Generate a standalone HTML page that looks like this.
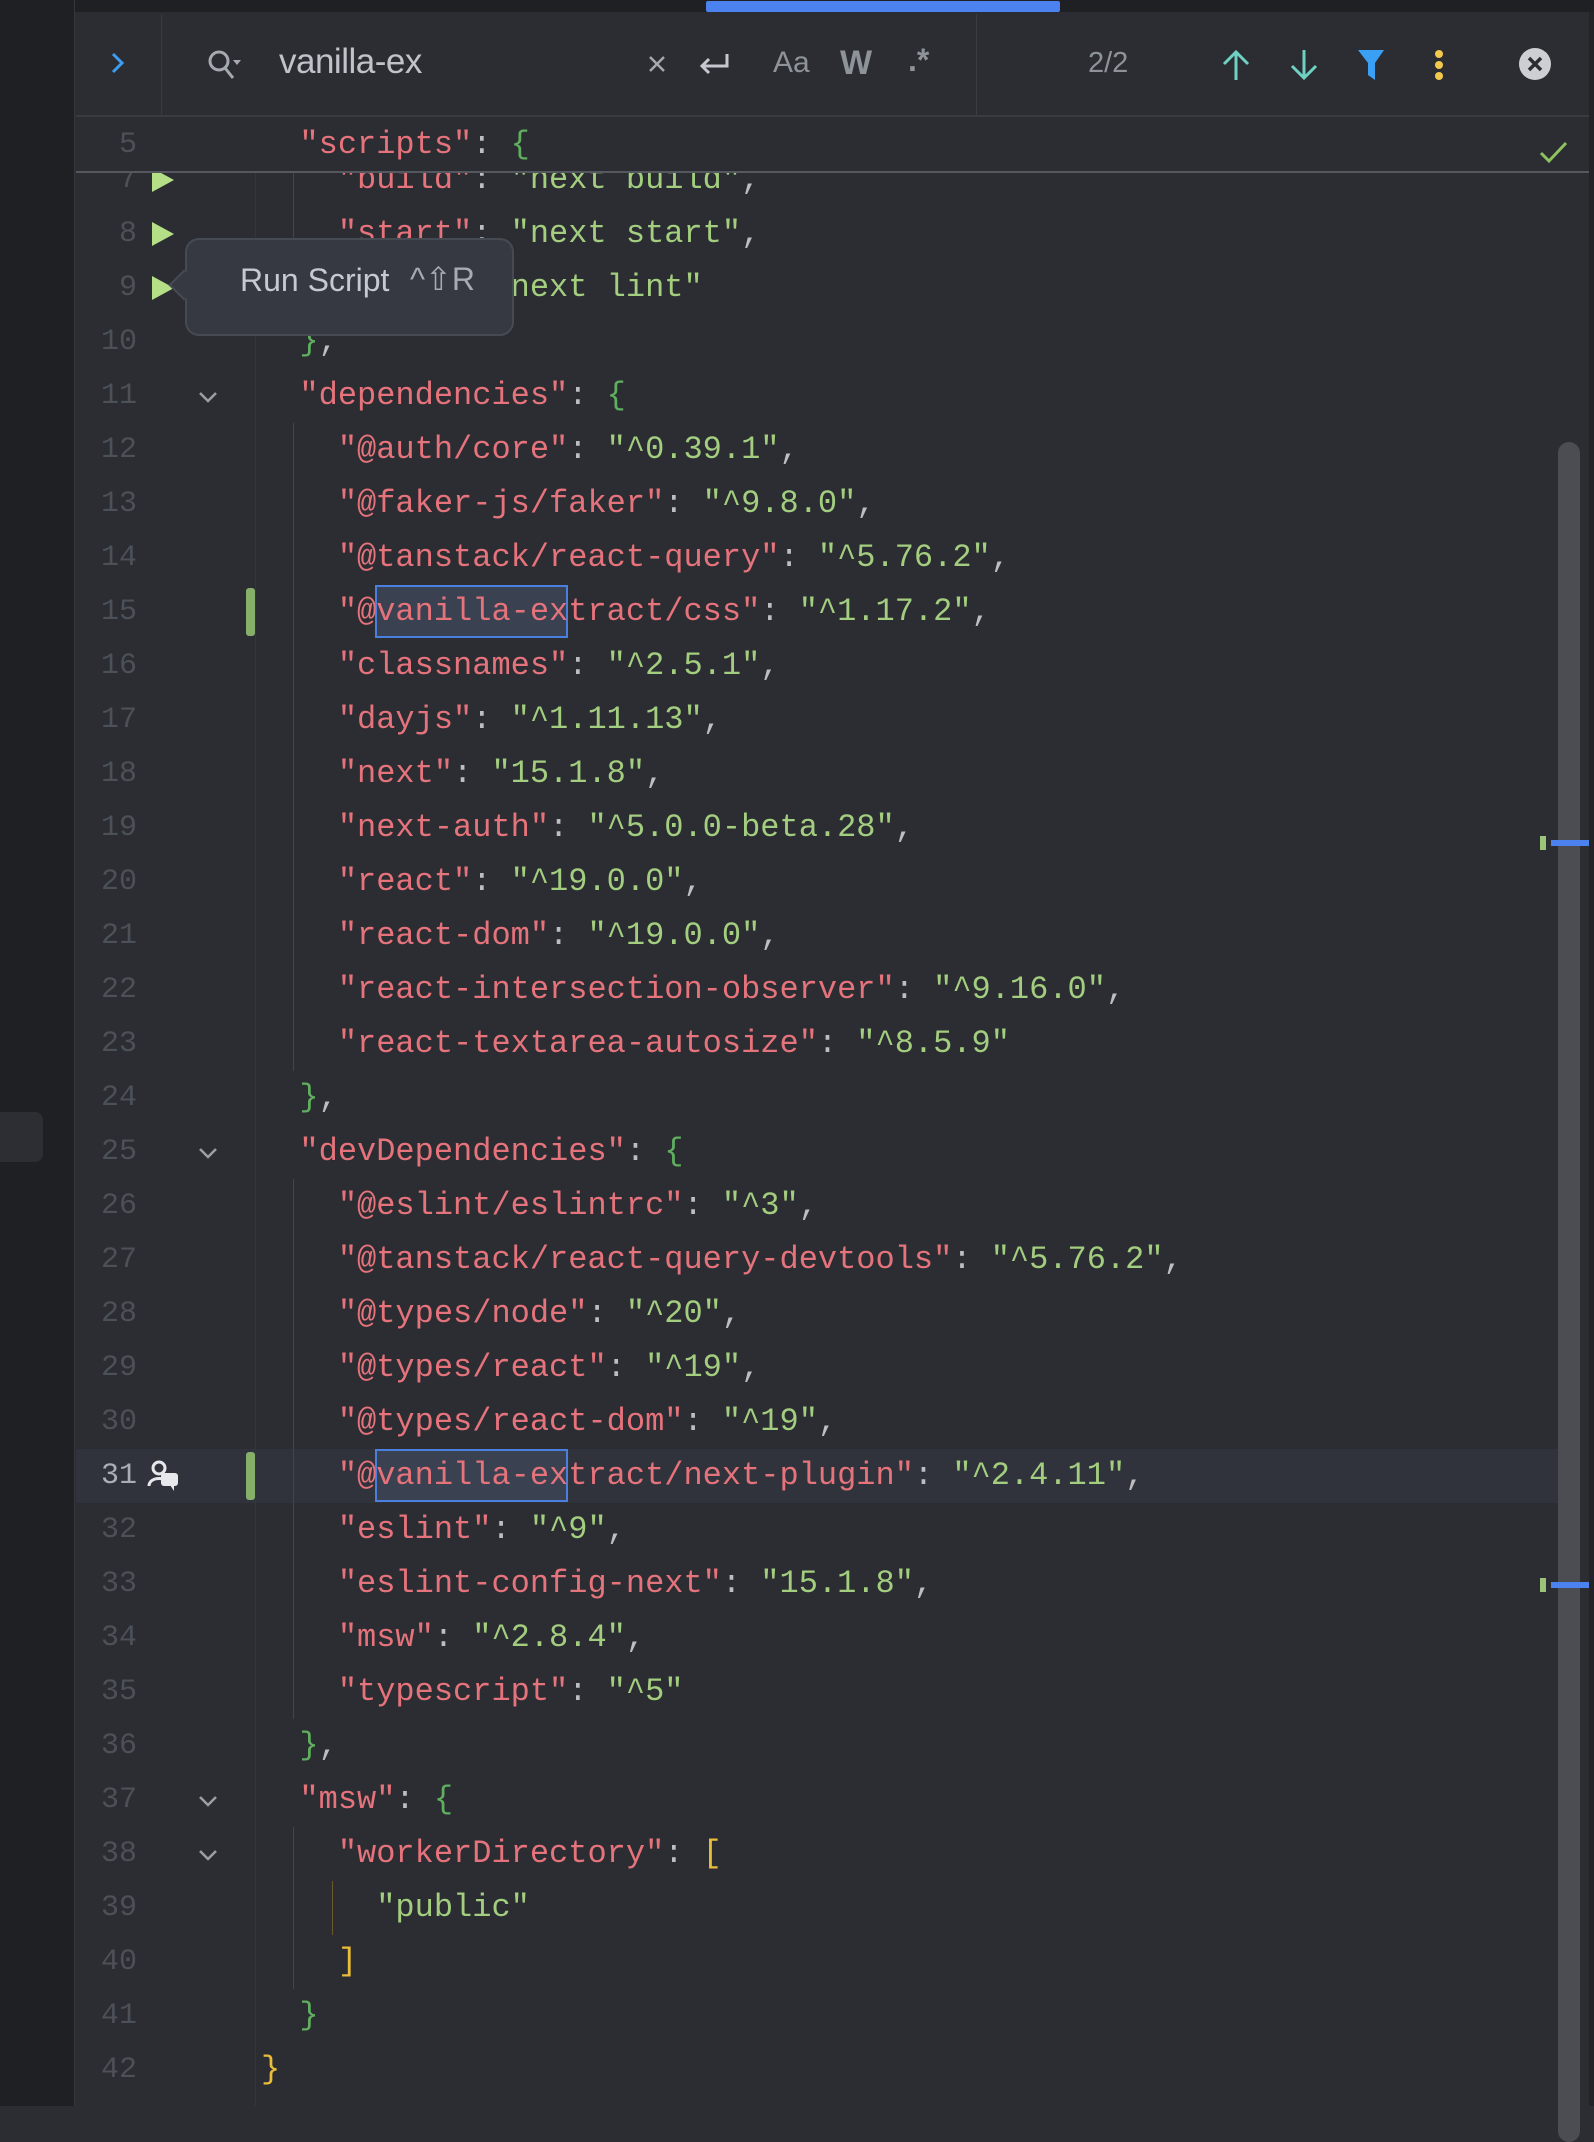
<!DOCTYPE html>
<html><head><meta charset="utf-8"><style>
*{margin:0;padding:0;box-sizing:border-box}
body{width:1594px;height:2106px;background:#2b2d32;position:relative;overflow:hidden;font-family:"Liberation Sans",sans-serif}
.abs{position:absolute}
.ln{position:absolute;left:75px;width:1480px;height:54px;}
.num{position:absolute;right:1418px;width:80px;text-align:right;font:30px/54px "Liberation Mono",monospace;color:#4c5058}
.code{position:absolute;left:261px;font:32px/54px "Liberation Mono",monospace;white-space:pre;color:#bcbec4}
.k{color:#e5737c}.s{color:#a3cd7f}.g{color:#5faf5f}.y{color:#e9bd3b}.p{color:#bcbec4}
.tri{position:absolute;left:152px;width:0;height:0;border-top:12px solid transparent;border-bottom:12px solid transparent;border-left:22px solid #b4df86}
.chev{position:absolute;left:198px;width:20px;height:20px}
.guide{position:absolute;width:1px;background:#3d4a3f}
</style></head><body>
<div class="abs" style="left:0;top:0;width:75px;height:2106px;background:#1f2024;border-right:1px solid #35373c"></div>
<div class="abs" style="left:0;top:1112px;width:43px;height:50px;background:#2c2e33;border-radius:0 8px 8px 0"></div>
<div class="abs" style="left:75px;top:0;width:1519px;height:12px;background:#1f2024"></div>
<div class="abs" style="left:706px;top:1px;width:354px;height:11px;background:#4b82f0;border-radius:2px"></div>
<div class="abs" style="left:76px;top:12px;width:1514px;height:105px;background:#2b2d32;border-bottom:2px solid #393b40"></div>
<div class="abs" style="left:161px;top:14px;width:1px;height:103px;background:#393b40"></div>
<div class="abs" style="left:976px;top:14px;width:1px;height:103px;background:#393b40"></div>
<svg class="abs" style="left:108px;top:50px" width="20" height="26" viewBox="0 0 20 26"><path d="M5 4 L14 13 L5 22" fill="none" stroke="#3d9df0" stroke-width="3"/></svg>
<svg class="abs" style="left:206px;top:48px" width="40" height="34" viewBox="0 0 40 34"><circle cx="13" cy="13" r="9" fill="none" stroke="#a5a9b0" stroke-width="3"/><path d="M19 20 L27 30" stroke="#a5a9b0" stroke-width="3"/><path d="M27 12 L35 12 L31 17Z" fill="#a5a9b0"/></svg>
<div class="abs" style="left:279px;top:42px;font-size:35px;color:#c0c3c9;letter-spacing:-0.5px">vanilla-ex</div>
<svg class="abs" style="left:647px;top:54px" width="20" height="20"><path d="M3 3L17 17M17 3L3 17" stroke="#a5a9b0" stroke-width="2.5"/></svg>
<svg class="abs" style="left:696px;top:50px" width="36" height="28"><path d="M31 4 V16 H6 M13 9 L6 16 L13 23" fill="none" stroke="#c5c8ce" stroke-width="3"/></svg>
<div class="abs" style="left:773px;top:46px;font-size:30px;color:#8e939a">Aa</div>
<div class="abs" style="left:840px;top:44px;font-size:34px;font-weight:bold;color:#8e939a">W</div>
<div class="abs" style="left:908px;top:42px;font-size:32px;font-weight:bold;color:#8e939a">.*</div>
<div class="abs" style="left:1088px;top:47px;font-size:29px;color:#8e939a">2/2</div>
<svg class="abs" style="left:1221px;top:48px" width="30" height="34"><path d="M15 32 V4 M3 16 L15 4 L27 16" fill="none" stroke="#6ed1c2" stroke-width="3"/></svg>
<svg class="abs" style="left:1289px;top:48px" width="30" height="34"><path d="M15 2 V30 M3 18 L15 30 L27 18" fill="none" stroke="#6ed1c2" stroke-width="3"/></svg>
<svg class="abs" style="left:1356px;top:48px" width="30" height="34"><path d="M2 2 H28 L19 15 V32 L12 27 V15 Z" fill="#3aa0f5"/></svg>
<svg class="abs" style="left:1432px;top:49px" width="14" height="34"><circle cx="7" cy="5" r="4" fill="#f2c94c"/><circle cx="7" cy="16" r="4" fill="#f2c94c"/><circle cx="7" cy="27" r="4" fill="#f2c94c"/></svg>
<svg class="abs" style="left:1518px;top:47px" width="34" height="34"><circle cx="17" cy="17" r="16" fill="#cdcfd3"/><path d="M11 11L23 23M23 11L11 23" stroke="#2b2d32" stroke-width="3.5"/></svg>

<div class="abs" id="ca" style="left:0;top:173px;width:1594px;height:1933px;overflow:hidden">
<div class="abs" style="left:0;top:0;width:1594px;height:2106px;transform:translateY(-173px)">
<div class="abs" style="left:76px;top:1449px;width:1482px;height:54px;background:#30333b"></div>
<div class="abs" style="left:255px;top:0;width:1px;height:2106px;background:#34363b"></div>
<div class="guide" style="left:293px;top:153px;height:162px"></div>
<div class="guide" style="left:293px;top:423px;height:648px"></div>
<div class="guide" style="left:293px;top:1179px;height:540px"></div>
<div class="guide" style="left:293px;top:1827px;height:162px"></div>
<div class="guide" style="left:332px;top:1881px;height:54px;background:#6b5a2e"></div>
<div class="abs" style="left:246px;top:588px;width:9px;height:48px;background:#86b06a;border-radius:3px"></div>
<div class="abs" style="left:246px;top:1452px;width:9px;height:48px;background:#86b06a;border-radius:3px"></div>
<div class="abs" style="left:375px;top:585px;width:193px;height:53px;background:#3a4150;border:2px solid #4a7fe0"></div>
<div class="abs" style="left:375px;top:1449px;width:193px;height:53px;background:#3a4150;border:2px solid #4a7fe0"></div>

<div class="ln" style="top:153px"><span class="num">7</span></div><div class="code" style="top:153px">    <span class="k">"build"</span>: <span class="s">"next build"</span>,</div>
<div class="tri" style="top:168px"></div>
<div class="ln" style="top:207px"><span class="num">8</span></div><div class="code" style="top:207px">    <span class="k">"start"</span>: <span class="s">"next start"</span>,</div>
<div class="tri" style="top:222px"></div>
<div class="ln" style="top:261px"><span class="num">9</span></div><div class="code" style="top:261px">    <span class="k">"lint"</span>: <span class="s">"next lint"</span></div>
<div class="tri" style="top:276px"></div>
<div class="ln" style="top:315px"><span class="num">10</span></div><div class="code" style="top:315px">  <span class="g">}</span>,</div>
<div class="ln" style="top:369px"><span class="num">11</span></div><div class="code" style="top:369px">  <span class="k">"dependencies"</span>: <span class="g">{</span></div>
<div class="ln" style="top:423px"><span class="num">12</span></div><div class="code" style="top:423px">    <span class="k">"@auth/core"</span>: <span class="s">"^0.39.1"</span>,</div>
<div class="ln" style="top:477px"><span class="num">13</span></div><div class="code" style="top:477px">    <span class="k">"@faker-js/faker"</span>: <span class="s">"^9.8.0"</span>,</div>
<div class="ln" style="top:531px"><span class="num">14</span></div><div class="code" style="top:531px">    <span class="k">"@tanstack/react-query"</span>: <span class="s">"^5.76.2"</span>,</div>
<div class="ln" style="top:585px"><span class="num">15</span></div><div class="code" style="top:585px">    <span class="k">"@vanilla-extract/css"</span>: <span class="s">"^1.17.2"</span>,</div>
<div class="ln" style="top:639px"><span class="num">16</span></div><div class="code" style="top:639px">    <span class="k">"classnames"</span>: <span class="s">"^2.5.1"</span>,</div>
<div class="ln" style="top:693px"><span class="num">17</span></div><div class="code" style="top:693px">    <span class="k">"dayjs"</span>: <span class="s">"^1.11.13"</span>,</div>
<div class="ln" style="top:747px"><span class="num">18</span></div><div class="code" style="top:747px">    <span class="k">"next"</span>: <span class="s">"15.1.8"</span>,</div>
<div class="ln" style="top:801px"><span class="num">19</span></div><div class="code" style="top:801px">    <span class="k">"next-auth"</span>: <span class="s">"^5.0.0-beta.28"</span>,</div>
<div class="ln" style="top:855px"><span class="num">20</span></div><div class="code" style="top:855px">    <span class="k">"react"</span>: <span class="s">"^19.0.0"</span>,</div>
<div class="ln" style="top:909px"><span class="num">21</span></div><div class="code" style="top:909px">    <span class="k">"react-dom"</span>: <span class="s">"^19.0.0"</span>,</div>
<div class="ln" style="top:963px"><span class="num">22</span></div><div class="code" style="top:963px">    <span class="k">"react-intersection-observer"</span>: <span class="s">"^9.16.0"</span>,</div>
<div class="ln" style="top:1017px"><span class="num">23</span></div><div class="code" style="top:1017px">    <span class="k">"react-textarea-autosize"</span>: <span class="s">"^8.5.9"</span></div>
<div class="ln" style="top:1071px"><span class="num">24</span></div><div class="code" style="top:1071px">  <span class="g">}</span>,</div>
<div class="ln" style="top:1125px"><span class="num">25</span></div><div class="code" style="top:1125px">  <span class="k">"devDependencies"</span>: <span class="g">{</span></div>
<div class="ln" style="top:1179px"><span class="num">26</span></div><div class="code" style="top:1179px">    <span class="k">"@eslint/eslintrc"</span>: <span class="s">"^3"</span>,</div>
<div class="ln" style="top:1233px"><span class="num">27</span></div><div class="code" style="top:1233px">    <span class="k">"@tanstack/react-query-devtools"</span>: <span class="s">"^5.76.2"</span>,</div>
<div class="ln" style="top:1287px"><span class="num">28</span></div><div class="code" style="top:1287px">    <span class="k">"@types/node"</span>: <span class="s">"^20"</span>,</div>
<div class="ln" style="top:1341px"><span class="num">29</span></div><div class="code" style="top:1341px">    <span class="k">"@types/react"</span>: <span class="s">"^19"</span>,</div>
<div class="ln" style="top:1395px"><span class="num">30</span></div><div class="code" style="top:1395px">    <span class="k">"@types/react-dom"</span>: <span class="s">"^19"</span>,</div>
<div class="ln" style="top:1449px"><span class="num" style="color:#a9adb4">31</span></div><div class="code" style="top:1449px">    <span class="k">"@vanilla-extract/next-plugin"</span>: <span class="s">"^2.4.11"</span>,</div>
<svg class="abs" style="left:146px;top:1458px" width="36" height="36" viewBox="0 0 36 36"><circle cx="13" cy="10" r="6" fill="none" stroke="#e6e8eb" stroke-width="3"/><path d="M3 28 C3 18 23 18 23 28" fill="none" stroke="#e6e8eb" stroke-width="3"/><rect x="15" y="15" width="17" height="13" rx="3" fill="#e6e8eb"/><path d="M24 27 L28 33 L28 27Z" fill="#e6e8eb"/></svg>
<div class="ln" style="top:1503px"><span class="num">32</span></div><div class="code" style="top:1503px">    <span class="k">"eslint"</span>: <span class="s">"^9"</span>,</div>
<div class="ln" style="top:1557px"><span class="num">33</span></div><div class="code" style="top:1557px">    <span class="k">"eslint-config-next"</span>: <span class="s">"15.1.8"</span>,</div>
<div class="ln" style="top:1611px"><span class="num">34</span></div><div class="code" style="top:1611px">    <span class="k">"msw"</span>: <span class="s">"^2.8.4"</span>,</div>
<div class="ln" style="top:1665px"><span class="num">35</span></div><div class="code" style="top:1665px">    <span class="k">"typescript"</span>: <span class="s">"^5"</span></div>
<div class="ln" style="top:1719px"><span class="num">36</span></div><div class="code" style="top:1719px">  <span class="g">}</span>,</div>
<div class="ln" style="top:1773px"><span class="num">37</span></div><div class="code" style="top:1773px">  <span class="k">"msw"</span>: <span class="g">{</span></div>
<div class="ln" style="top:1827px"><span class="num">38</span></div><div class="code" style="top:1827px">    <span class="k">"workerDirectory"</span>: <span class="y">[</span></div>
<div class="ln" style="top:1881px"><span class="num">39</span></div><div class="code" style="top:1881px">      <span class="s">"public"</span></div>
<div class="ln" style="top:1935px"><span class="num">40</span></div><div class="code" style="top:1935px">    <span class="y">]</span></div>
<div class="ln" style="top:1989px"><span class="num">41</span></div><div class="code" style="top:1989px">  <span class="g">}</span></div>
<div class="ln" style="top:2043px"><span class="num">42</span></div><div class="code" style="top:2043px"><span class="y">}</span></div>
<svg class="chev" style="top:387px"><path d="M2 6 L10 14 L18 6" fill="none" stroke="#9a9ea5" stroke-width="2.5"/></svg>
<svg class="chev" style="top:1143px"><path d="M2 6 L10 14 L18 6" fill="none" stroke="#9a9ea5" stroke-width="2.5"/></svg>
<svg class="chev" style="top:1791px"><path d="M2 6 L10 14 L18 6" fill="none" stroke="#9a9ea5" stroke-width="2.5"/></svg>
<svg class="chev" style="top:1845px"><path d="M2 6 L10 14 L18 6" fill="none" stroke="#9a9ea5" stroke-width="2.5"/></svg>
</div></div>

<div class="abs" style="left:76px;top:119px;width:1514px;height:54px;background:#2b2d32;border-bottom:2px solid #55585e"></div>
<div class="ln" style="top:118px"><span class="num">5</span></div><div class="code" style="top:118px">  <span class="k">"scripts"</span>: <span class="g">{</span></div>
<svg class="abs" style="left:1538px;top:138px" width="32" height="28"><path d="M3 15 L11 23 L28 5" fill="none" stroke="#8fc15f" stroke-width="3"/></svg>

<div class="abs" style="left:1558px;top:442px;width:22px;height:1700px;background:#4b4d53;border-radius:11px"></div>
<div class="abs" style="left:1589px;top:12px;width:5px;height:2094px;background:#222327"></div>
<div class="abs" style="left:1540px;top:836px;width:6px;height:14px;background:#9cc37a"></div>
<div class="abs" style="left:1551px;top:840px;width:38px;height:6px;background:#4b82f0"></div>
<div class="abs" style="left:1540px;top:1578px;width:6px;height:14px;background:#9cc37a"></div>
<div class="abs" style="left:1551px;top:1582px;width:38px;height:6px;background:#4b82f0"></div>

<div class="abs" style="left:185px;top:238px;width:329px;height:98px;background:#363941;border:2px solid #464a52;border-radius:14px"></div>
<div class="abs" style="left:173px;top:274px;width:22px;height:22px;background:#363941;border-left:2px solid #464a52;border-bottom:2px solid #464a52;transform:rotate(45deg)"></div>
<div class="abs" style="left:240px;top:262px;font-size:32px;color:#c6c9cf">Run Script</div>
<div class="abs" style="left:410px;top:260px;font-size:32px;color:#a6aab1">^⇧R</div>
</body></html>
